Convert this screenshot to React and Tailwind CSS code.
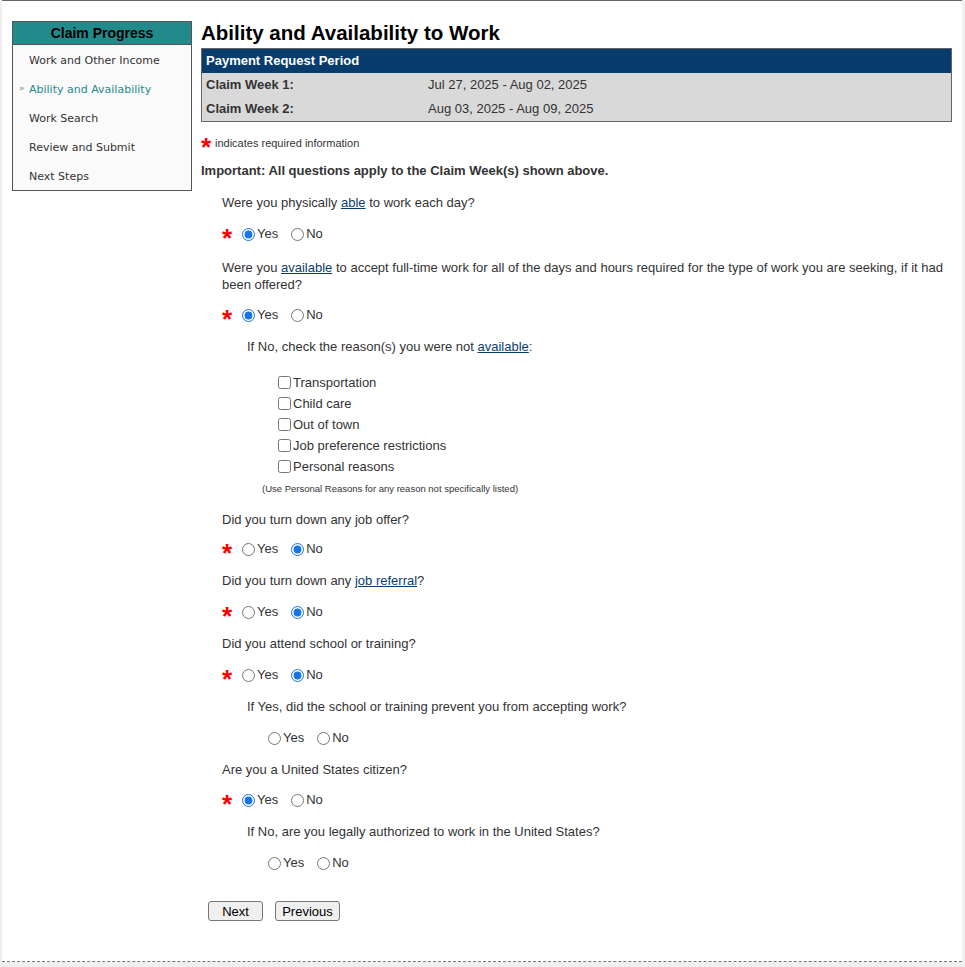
import React from "react";

const F = { fontFamily: '"Liberation Sans", Arial, sans-serif' };

function Star({ className = "" }) {
  return (
    <span className={"text-[#ff0000] font-bold text-[26px] leading-none " + className}>*</span>
  );
}

function Radio({ name, checked, label }) {
  return (
    <label className="flex items-center mr-[13px]">
      <input
        type="radio"
        name={name}
        defaultChecked={checked}
        className="m-0 w-[13px] h-[13px] accent-[#1a73e8]"
      />
      <span className="ml-[2px] text-[13px] text-[#333]">{label}</span>
    </label>
  );
}

function RadioRow({ name, value, required = true, mt, indent = false }) {
  return (
    <div className={"flex items-center h-[20px] " + mt + (indent ? " pl-[46px]" : "")}>
      {required && (
        <span className="w-[20px] h-[20px] flex items-center">
          <Star className="mt-[7px]" />
        </span>
      )}
      <Radio name={name} checked={value === "yes"} label="Yes" />
      <Radio name={name} checked={value === "no"} label="No" />
    </div>
  );
}

function Link({ children }) {
  return <a href="#" className="text-[#0b3d6e] underline">{children}</a>;
}

function Q({ children, mt, sub = false }) {
  return (
    <div className={"text-[13px] leading-[16px] text-[#333] " + mt + (sub ? " pl-[25px]" : "")}>
      {children}
    </div>
  );
}

export default function App() {
  const items = [
    "Work and Other Income",
    "Ability and Availability",
    "Work Search",
    "Review and Submit",
    "Next Steps",
  ];
  const reasons = [
    "Transportation",
    "Child care",
    "Out of town",
    "Job preference restrictions",
    "Personal reasons",
  ];
  return (
    <div className="min-h-[967px] bg-[#efefef]" style={F}>
      <div className="ml-[2px] w-[960px] h-[962px] bg-white border-t border-[#666] flex flex-col">
        <div className="flex pt-[20px]">
          {/* Sidebar */}
          <div className="ml-[10px] w-[180px] h-[170px] border border-[#555] bg-[#fafafa] shrink-0 overflow-hidden">
            <div className="h-[23px] bg-[#218b8c] border-b border-[#555] flex items-center justify-center text-[14px] font-bold text-black">
              Claim Progress
            </div>
            <div className="pt-[2px]" style={{ fontFamily: '"DejaVu Sans", Verdana, sans-serif' }}>
              {items.map((it, i) => (
                <div key={it} className="h-[29px] flex items-center relative pl-[16px] text-[11px]">
                  {i === 1 && (
                    <span className="absolute left-[6px] top-[6px] text-[9px] text-[#888]">»</span>
                  )}
                  <span className={i === 1 ? "text-[#1f8a8c]" : "text-[#333]"}>{it}</span>
                </div>
              ))}
            </div>
          </div>

          {/* Main */}
          <div className="ml-[9px] w-[751px]">
            <h1 className="h-[24px] leading-[24px] text-[20.5px] font-bold text-black">
              Ability and Availability to Work
            </h1>
            <div className="mt-[3px] border border-[#666] text-[13px]">
              <div className="h-[24px] bg-[#083c6c] text-white font-bold flex items-center pl-[4px]">
                Payment Request Period
              </div>
              <div className="h-[24px] bg-[#d9d9d9] flex items-center pl-[4px] text-[#333]">
                <span className="w-[222px] font-bold">Claim Week 1:</span>
                <span>Jul 27, 2025 - Aug 02, 2025</span>
              </div>
              <div className="h-[24px] bg-[#d9d9d9] flex items-center pl-[4px] text-[#333]">
                <span className="w-[222px] font-bold">Claim Week 2:</span>
                <span>Aug 03, 2025 - Aug 09, 2025</span>
              </div>
            </div>

            <div className="mt-[13px] h-[16px] flex items-center">
              <span className="w-[14px] h-[16px] flex items-center">
                <Star className="mt-[7px]" />
              </span>
              <span className="text-[11px] text-[#333]">indicates required information</span>
            </div>
            <div className="mt-[12px] h-[16px] leading-[16px] text-[13px] font-bold text-[#333]">
              Important: All questions apply to the Claim Week(s) shown above.
            </div>

            <div className="pl-[21px]">
              <Q mt="mt-[16px]">
                Were you physically <Link>able</Link> to work each day?
              </Q>
              <RadioRow name="q1" value="yes" mt="mt-[13px]" />

              <div className="mt-[15px] text-[13px] leading-[17px] text-[#333]">
                Were you <Link>available</Link> to accept full-time work for all of the days and hours required for the type of work you are seeking, if it had been offered?
              </div>
              <RadioRow name="q2" value="yes" mt="mt-[12px]" />

              <Q mt="mt-[14px]" sub>
                If No, check the reason(s) you were not <Link>available</Link>:
              </Q>
              <div className="mt-[17px] pl-[56px]">
                {reasons.map((r) => (
                  <label key={r} className="h-[21px] flex items-center">
                    <input type="checkbox" className="m-0 w-[13px] h-[13px]" />
                    <span className="ml-[2px] text-[13px] text-[#333]">{r}</span>
                  </label>
                ))}
              </div>
              <div className="mt-[6px] pl-[40px] h-[12px] leading-[12px] text-[9.5px] text-[#333]">
                (Use Personal Reasons for any reason not specifically listed)
              </div>

              <Q mt="mt-[17px]">Did you turn down any job offer?</Q>
              <RadioRow name="q3" value="no" mt="mt-[11px]" />

              <Q mt="mt-[14px]">
                Did you turn down any <Link>job referral</Link>?
              </Q>
              <RadioRow name="q4" value="no" mt="mt-[13px]" />

              <Q mt="mt-[14px]">Did you attend school or training?</Q>
              <RadioRow name="q5" value="no" mt="mt-[13px]" />
              <Q mt="mt-[14px]" sub>
                If Yes, did the school or training prevent you from accepting work?
              </Q>
              <RadioRow name="q5b" value="" required={false} indent mt="mt-[13px]" />

              <Q mt="mt-[14px]">Are you a United States citizen?</Q>
              <RadioRow name="q6" value="yes" mt="mt-[12px]" />
              <Q mt="mt-[14px]" sub>
                If No, are you legally authorized to work in the United States?
              </Q>
              <RadioRow name="q6b" value="" required={false} indent mt="mt-[13px]" />
            </div>

            <div className="mt-[28px] pl-[7px] flex gap-[12px]">
              <button className="w-[55px] h-[20px] bg-[#efefef] border border-[#767676] rounded-[3px] text-[13px] text-black">
                Next
              </button>
              <button className="w-[65px] h-[20px] bg-[#efefef] border border-[#767676] rounded-[3px] text-[13px] text-black">
                Previous
              </button>
            </div>
          </div>
        </div>
        <div className="mt-auto border-b border-dashed border-[#777]"></div>
      </div>
    </div>
  );
}
